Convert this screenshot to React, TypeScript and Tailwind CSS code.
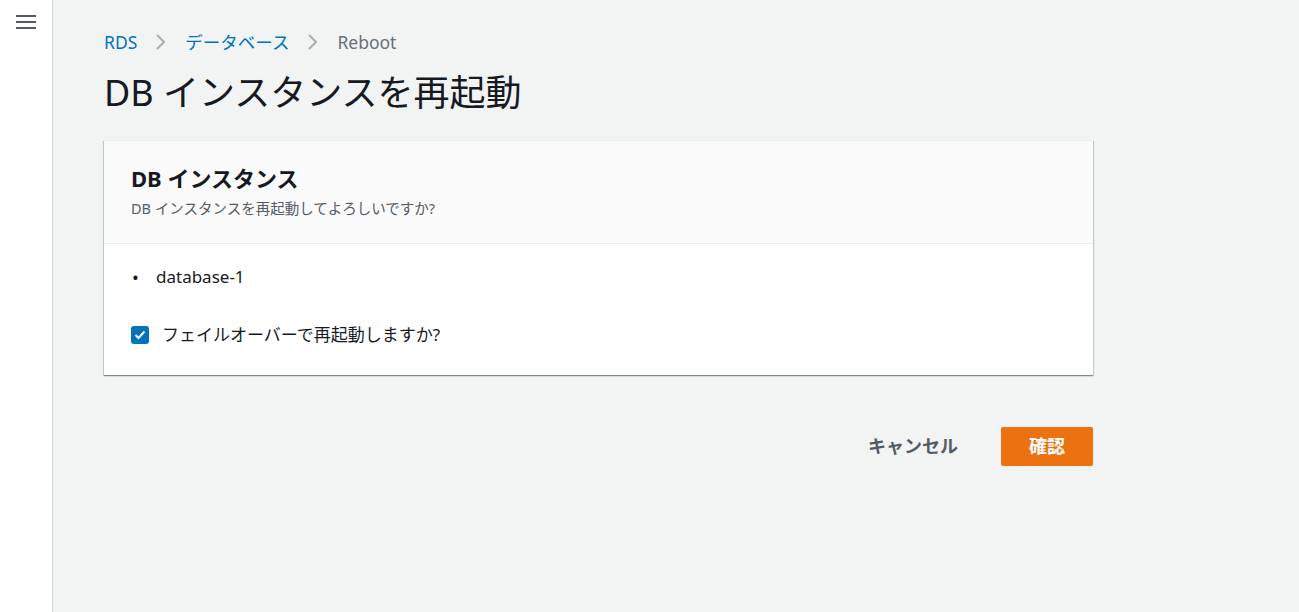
const font = { fontFamily: '"Noto Sans", "Noto Sans CJK JP", sans-serif' };

function Chevron() {
  return (
    <svg width="12" height="18" viewBox="0 0 12 18" fill="none" className="mx-[18px]">
      <path d="M2 2l7 7-7 7" stroke="#a5afb0" strokeWidth="2" />
    </svg>
  );
}

export default function App() {
  return (
    <div style={font} className="flex w-[1299px] h-[612px] bg-[#f2f3f3] overflow-hidden">
      {/* side nav */}
      <div className="w-[53px] shrink-0 bg-white border-r border-[#d5dbdb] flex justify-center pt-[14px]">
        <svg width="20" height="16" viewBox="0 0 20 16" className="mr-[1px]">
          <rect x="0" y="1" width="20" height="2" fill="#545b64" />
          <rect x="0" y="7" width="20" height="2" fill="#545b64" />
          <rect x="0" y="13" width="20" height="2" fill="#545b64" />
        </svg>
      </div>

      <div className="flex-1 pl-[51px] pt-[28px]">
        <div className="w-[989px]">
          {/* breadcrumb */}
          <div className="flex items-center h-[28px] text-[17.5px]">
            <span className="text-[#0073bb]">RDS</span>
            <Chevron />
            <span className="text-[#0073bb]">データベース</span>
            <Chevron />
            <span className="text-[#687078]">Reboot</span>
          </div>

          <h1 className="mt-[14px] text-[36px] leading-[46px] text-[#16191f]">DB インスタンスを再起動</h1>

          {/* card */}
          <div className="mt-[24px] bg-white shadow-[0_1px_1px_0_rgba(0,28,36,0.3),1px_1px_1px_0_rgba(0,28,36,0.15),-1px_1px_1px_0_rgba(0,28,36,0.15)] border-t border-[#eaeded]">
            <div className="bg-[#fafafa] border-b border-[#eaeded] px-[27px] pt-[22px] h-[103px]">
              <div className="text-[22px] leading-[30px] font-bold text-[#16191f]">DB インスタンス</div>
              <div className="text-[14.5px] leading-[20px] mt-[5px] text-[#545b64]">
                DB インスタンスを再起動してよろしいですか?
              </div>
            </div>
            <div className="px-[27px] pt-[21px] pb-[28px]">
              <div className="flex items-center h-[24px] text-[17px] text-[#16191f]">
                <span className="w-[25px] pl-[1px] text-[18px]">•</span>
                <span>database-1</span>
              </div>
              <div className="flex items-center mt-[34px] h-[24px] text-[17px] text-[#16191f]">
                <span className="w-[18px] h-[18px] rounded-[3px] bg-[#0073bb] flex items-center justify-center">
                  <svg width="12" height="10" viewBox="0 0 12 10" fill="none">
                    <path d="M1.5 5l3 3 6-6.5" stroke="white" strokeWidth="2" />
                  </svg>
                </span>
                <span className="ml-[13px]">フェイルオーバーで再起動しますか?</span>
              </div>
            </div>
          </div>

          {/* actions */}
          <div className="flex justify-end items-center mt-[52px]">
            <span className="text-[18px] font-bold text-[#545b64] mr-[43px]">キャンセル</span>
            <span className="w-[92px] h-[39px] rounded-[2px] bg-[#ec7211] flex items-center justify-center text-[18px] font-bold text-white">
              確認
            </span>
          </div>
        </div>
      </div>
    </div>
  );
}
